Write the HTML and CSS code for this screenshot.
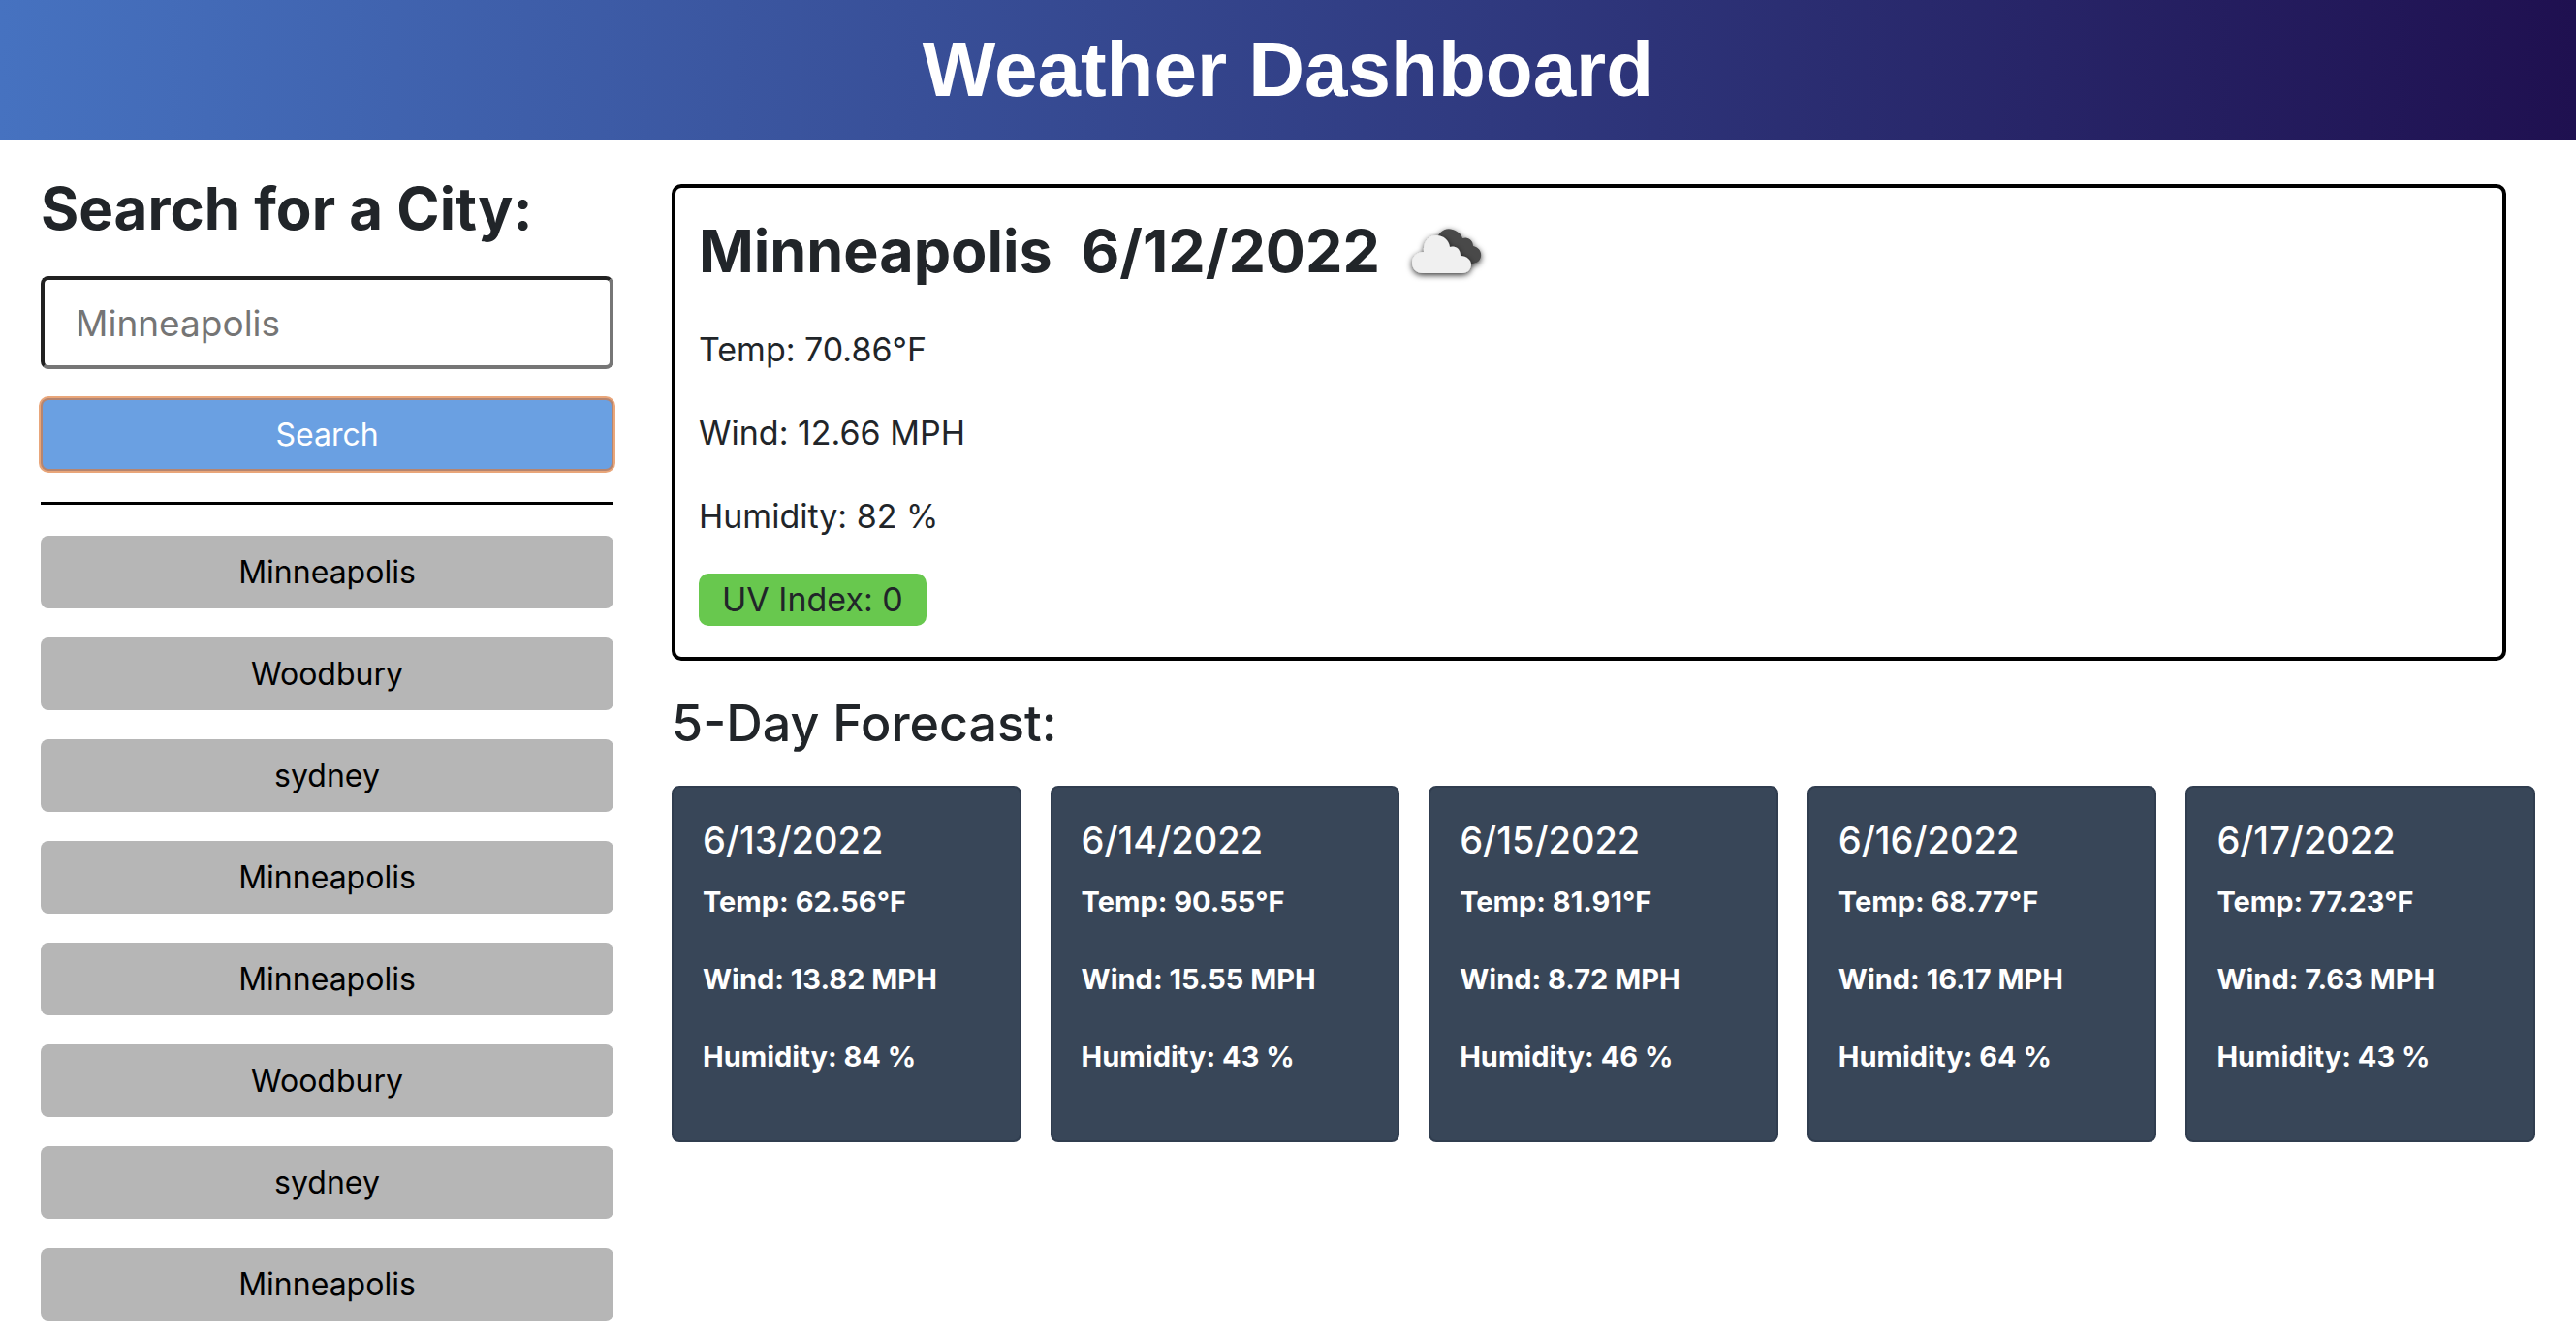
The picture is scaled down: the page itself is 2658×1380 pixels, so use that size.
FILE: index.html
```html
<!DOCTYPE html>
<html lang="en">
<head>
<meta charset="utf-8">
<meta name="viewport" content="width=device-width, initial-scale=1">
<title>Weather Dashboard</title>
<link rel="stylesheet" href="styles.css">
</head>
<body>
<header class="header"><h1 class="title">Weather Dashboard</h1></header>
<div class="layout">
  <aside class="sidebar">
    <form class="search">
      <label class="search-label" for="city">Search for a City:</label>
      <input class="search-input" id="city" type="text" placeholder="Minneapolis">
      <button class="btn btn-search" type="button">Search</button>
    </form>
    <hr class="divider">
    <div class="history">
      <button class="btn" type="button">Minneapolis</button>
      <button class="btn" type="button">Woodbury</button>
      <button class="btn" type="button">sydney</button>
      <button class="btn" type="button">Minneapolis</button>
      <button class="btn" type="button">Minneapolis</button>
      <button class="btn" type="button">Woodbury</button>
      <button class="btn" type="button">sydney</button>
      <button class="btn" type="button">Minneapolis</button>
    </div>
  </aside>
  <main class="main">
    <section class="current">
      <h2 class="current-title">
        <span>Minneapolis</span>
        <span>6/12/2022</span>
        <svg class="icon" viewBox="0 0 100 100" role="img" aria-label="Broken clouds">
          <defs>
            <filter id="shadow" x="-20%" y="-20%" width="140%" height="150%">
              <feDropShadow dx="0" dy="2" stdDeviation="3" flood-color="#000" flood-opacity="0.8"/>
            </filter>
          </defs>
          <path filter="url(#shadow)" fill="#484848" d="M38 38C39 28 47 22 55 25C61 27 64 30 65 34C71 32 76 36 76 42C82 43 85 48 84 53C83 58 79 60 74 60H48Z"/>
          <path filter="url(#shadow)" fill="#f0f0f0" d="M24 70C16 70 13 64 13 59C13 53 18 48 25 48C24 38 30 31 38 31C46 31 51 36 52 43C58 41 63 45 63 52C69 52 74 56 74 61C74 66 70 70 65 70Z"/>
        </svg>
      </h2>
      <p class="stat">Temp: 70.86°F</p>
      <p class="stat">Wind: 12.66 MPH</p>
      <p class="stat">Humidity: 82 %</p>
      <p class="stat uv">UV Index: 0</p>
    </section>
    <h3 class="forecast-title">5-Day Forecast:</h3>
    <section class="forecast">
      <article class="card"><h4 class="card-date">6/13/2022</h4><p class="card-stat">Temp: 62.56°F</p><p class="card-stat">Wind: 13.82 MPH</p><p class="card-stat">Humidity: 84 %</p></article>
      <article class="card"><h4 class="card-date">6/14/2022</h4><p class="card-stat">Temp: 90.55°F</p><p class="card-stat">Wind: 15.55 MPH</p><p class="card-stat">Humidity: 43 %</p></article>
      <article class="card"><h4 class="card-date">6/15/2022</h4><p class="card-stat">Temp: 81.91°F</p><p class="card-stat">Wind: 8.72 MPH</p><p class="card-stat">Humidity: 46 %</p></article>
      <article class="card"><h4 class="card-date">6/16/2022</h4><p class="card-stat">Temp: 68.77°F</p><p class="card-stat">Wind: 16.17 MPH</p><p class="card-stat">Humidity: 64 %</p></article>
      <article class="card"><h4 class="card-date">6/17/2022</h4><p class="card-stat">Temp: 77.23°F</p><p class="card-stat">Wind: 7.63 MPH</p><p class="card-stat">Humidity: 43 %</p></article>
    </section>
  </main>
</div>
</body>
</html>
```
FILE: styles.css
```css
* {
  box-sizing: border-box;
}

body {
  margin: 0;
  background: #fff;
  color: #212529;
  font-family: Inter, sans-serif;
}

h1, h2, h3, h4, p {
  margin: 0;
}

.header {
  padding: 24px;
  background: linear-gradient(to right, #4672c0, #1f1050);
  text-align: center;
}

.title {
  color: #fff;
  font: bold 80px/96px "Liberation Sans", sans-serif;
}

.layout {
  display: grid;
  grid-template-columns: 197fr 641fr;
  gap: 60px;
  padding: 0 42px;
}

.sidebar {
  padding-top: 33px;
}

.search {
  display: flex;
  flex-direction: column;
}

.search-label {
  margin-bottom: 32px;
  font-size: 60px;
  font-weight: 700;
  line-height: 76px;
}

.search-input {
  width: 100%;
  height: 96px;
  margin-bottom: 30px;
  padding: 0 32px;
  border: 4px solid;
  border-color: #212121 #767676 #767676 #212121;
  border-radius: 8px;
  background: #fff;
  color: #212529;
  font: 37px Inter, sans-serif;
}

.search-input::placeholder {
  color: #757575;
}

.btn {
  height: 75px;
  padding: 0;
  border: 0;
  border-radius: 8px;
  background: #b6b6b6;
  color: #000;
  font: 32px Inter, sans-serif;
}

.btn-search {
  background: #6aa0e2;
  color: #fff;
  outline: 4px solid rgba(221, 119, 51, 0.65);
  outline-offset: -2px;
}

.divider {
  height: 3px;
  margin: 32px 0;
  border: 0;
  background: #000;
}

.history {
  display: flex;
  flex-direction: column;
  gap: 30px;
}

.main {
  padding-top: 46px;
}

.current {
  display: flex;
  flex-direction: column;
  align-items: flex-start;
  margin-right: 30px;
  padding: 15px 24px 32px;
  border: 4px solid #000;
  border-radius: 10px;
}

.current-title {
  display: flex;
  align-items: center;
  gap: 30px;
  height: 100px;
  margin-bottom: 25px;
  font-size: 61px;
  font-weight: 700;
  line-height: 100px;
}

.icon {
  width: 100px;
  height: 100px;
  margin: 6px 0 0 -10px;
}

.stat {
  margin-bottom: 32px;
  font-size: 34px;
  line-height: 54px;
}

.uv {
  margin-bottom: 0;
  padding: 0 24px;
  border-radius: 10px;
  background: #68c84e;
}

.forecast-title {
  margin: 30px 0;
  font-size: 52px;
  font-weight: 500;
  line-height: 69px;
}

.forecast {
  display: grid;
  grid-template-columns: repeat(5, 1fr);
  gap: 30px;
}

.card {
  padding: 30px 30px 62px;
  border: 2px solid #303d4f;
  border-radius: 8px;
  background: #384658;
  color: #fff;
}

.card-date {
  margin-bottom: 16px;
  font-size: 38px;
  font-weight: 500;
  line-height: 48px;
}

.card-stat {
  margin-bottom: 32px;
  font-size: 29px;
  font-weight: 700;
  line-height: 48px;
}

.card-stat:last-child {
  margin-bottom: 0;
}
```
